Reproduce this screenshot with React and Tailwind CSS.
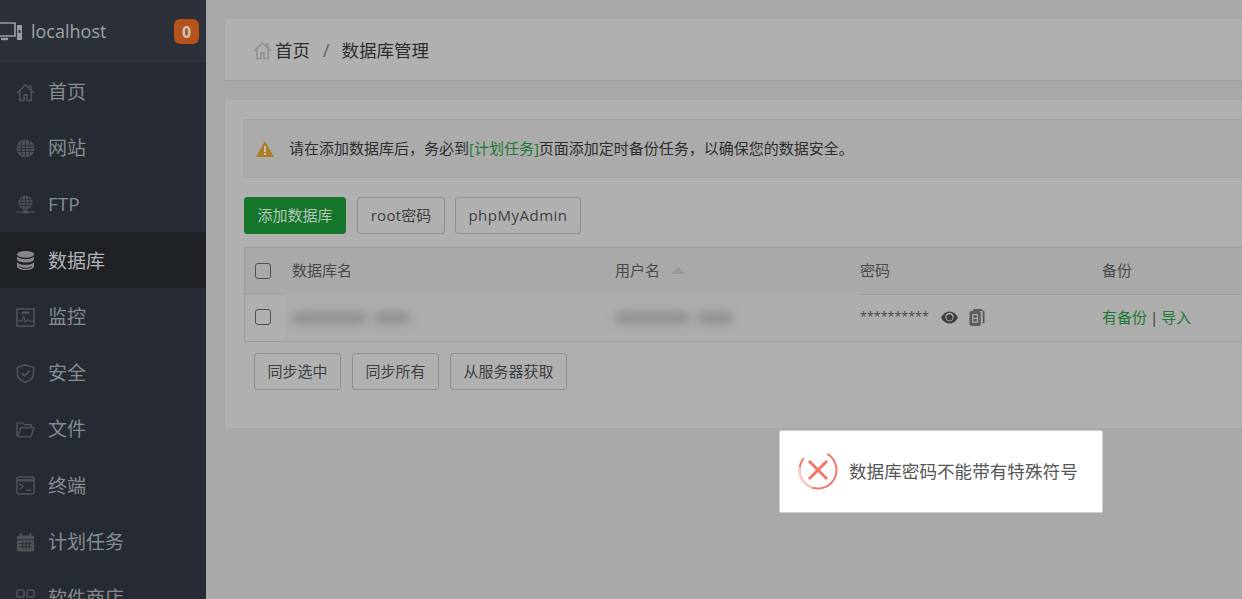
import React from "react";

const HomeI = (p) => (
  <svg viewBox="0 0 20 20" fill="none" stroke="currentColor" strokeWidth="1.600" {...p}>
    <path d="M1 10.500L10 2l9 8.500" />
    <path d="M4 8.500V18.500h4.500V12.500h3V18.500H16V8.500" />
    <path d="M14 3v3.500M14 3h2v5" strokeWidth="1.300" />
  </svg>
);
const Ftp = (p) => (
  <svg viewBox="0 0 20 20" {...p}>
    <circle cx="10" cy="8" r="7.500" fill="currentColor" />
    <path d="M2.500 8h15M2.500 5h15M2.500 11h15M10 .5v15M7 1c-1.500 4-1.500 10 0 14M13 1c1.500 4 1.500 10 0 14" stroke="#262b33" strokeWidth="0.800" fill="none" />
    <path d="M0 18h20" stroke="currentColor" strokeWidth="1.200" />
    <rect x="7.500" y="16" width="5" height="3.500" fill="currentColor" />
  </svg>
);
const GlobeGrid = (p) => (
  <svg viewBox="0 0 20 20" fill="currentColor" {...p}>
    <circle cx="10" cy="10" r="9.500" />
    <path d="M1 7h18M1 10h18M1 13h18M10 1v18M6.500 1.500c-1.500 5-1.500 12 0 17M13.500 1.500c1.500 5 1.500 12 0 17" stroke="#262b33" strokeWidth="0.900" fill="none" />
  </svg>
);
const Db = (p) => (
  <svg viewBox="0 0 20 20" fill="currentColor" {...p}>
    <ellipse cx="10" cy="3.500" rx="9" ry="3.500" />
    <path d="M1 5.500c1.500 2.200 5 3 9 3s7.500-.8 9-3v3.500c-1 2.200-5 3.200-9 3.200S2 11.200 1 9z" />
    <path d="M1 11.500c1.500 2.200 5 3 9 3s7.500-.8 9-3V16c0 2.300-4 4-9 4s-9-1.700-9-4z" />
    <path d="M3 16.200c2 1.500 4.500 2 7 2s5-.5 7-2" stroke="#1e2126" strokeWidth="0.900" fill="none" />
  </svg>
);
const Monitor = (p) => (
  <svg viewBox="0 0 20 20" fill="none" stroke="currentColor" strokeWidth="1.600" {...p}>
    <rect x="1" y="1" width="18" height="18" />
    <path d="M2 13l4 1 2-5 2 6 2-3 2 2h4" strokeWidth="1.100" />
    <path d="M6 5h8" strokeWidth="2.500" />
  </svg>
);
const Shield = (p) => (
  <svg viewBox="0 0 20 20" fill="none" stroke="currentColor" strokeWidth="1.700" {...p}>
    <path d="M10 1L18.500 3.500V10.500C18.500 15 14.500 17.500 10 19.500 5.500 17.500 1.500 15 1.500 10.500V3.500z" />
    <path d="M6 9.500l3 3 5.500-5.500" strokeWidth="1.900" />
  </svg>
);
const Folder = (p) => (
  <svg viewBox="0 0 20 20" fill="none" stroke="currentColor" strokeWidth="1.500" {...p}>
    <path d="M1 17V3h6l2 2h7v3" />
    <path d="M1 17.500h15l3-9.500H5l-3 9" />
  </svg>
);
const Term = (p) => (
  <svg viewBox="0 0 20 20" fill="none" stroke="currentColor" strokeWidth="1.500" {...p}>
    <rect x="1" y="1" width="18" height="18" rx="1.500" />
    <path d="M1 4.500h18" strokeWidth="2.500" />
    <path d="M4 8l3.500 3L4 14M10 15h6" />
  </svg>
);
const Cal = (p) => (
  <svg viewBox="0 0 20 20" fill="currentColor" {...p}>
    <rect x="1" y="2.500" width="18" height="17" rx="2" />
    <path d="M5 0v4M15 0v4" stroke="currentColor" strokeWidth="2" />
    <path d="M1 7h18M3 11h14M3 14.500h14M7 9v8M10.500 9v8M14 9v8" stroke="#262b33" strokeWidth="0.900" />
  </svg>
);
const Apps = (p) => (
  <svg viewBox="0 0 20 20" fill="none" stroke="currentColor" strokeWidth="1.600" {...p}>
    <rect x="1" y="1" width="7.500" height="7.500" rx="2" />
    <rect x="11.500" y="1" width="7.500" height="7.500" rx="2" />
    <rect x="1" y="11.500" width="7.500" height="7.500" rx="2" />
    <rect x="11.500" y="11.500" width="7.500" height="7.500" rx="2" />
  </svg>
);
const Server = (p) => (
  <svg viewBox="0 0 22 20" fill="none" stroke="currentColor" strokeWidth="1.700" {...p}>
    <path d="M0 1h15v13H0" />
    <path d="M1 17h7" strokeWidth="2.400" />
    <rect x="17" y="3" width="5" height="15" fill="currentColor" stroke="none" />
    <rect x="18.500" y="8" width="2" height="3" fill="#2c3038" stroke="none" />
  </svg>
);

const nav = [
  ["首页", HomeI],
  ["网站", GlobeGrid],
  ["FTP", Ftp],
  ["数据库", Db, true],
  ["监控", Monitor],
  ["安全", Shield],
  ["文件", Folder],
  ["终端", Term],
  ["计划任务", Cal],
  ["软件商店", Apps],
];

const Btn = ({ children, className = "" }) => (
  <button className={`h-[37px] rounded-[3px] border border-[#8f8f8f] text-[15px] text-[#3f3f3f] ${className}`}>
    {children}
  </button>
);
const Check = () => <span className="block h-4 w-4 rounded-[3px] border border-[#4f4f4f]" />;
const Blur = ({ w1, w2 }) => (
  <span className="flex items-center gap-[7px]">
    <span className="block h-[12px] rounded-full bg-[#8f8f8f] blur-[5px]" style={{ width: w1 }} />
    <span className="block h-[12px] rounded-full bg-[#8f8f8f] blur-[5px]" style={{ width: w2 }} />
  </span>
);

export default function App() {
  return (
    <div
      className="relative flex h-[599px] w-[1242px] overflow-hidden bg-[#a8a8a8]"
      style={{ fontFamily: '"Open Sans","Noto Sans CJK SC",sans-serif' }}
    >
      <aside className="w-[206px] shrink-0 overflow-hidden bg-[#262b33]">
        <div className="flex h-[63px] items-center justify-between bg-[#2c3038] pr-[7px]">
          <div className="flex items-center">
            <Server className="h-[20px] w-[22px] text-[#9a9c9f]" />
            <span className="ml-[9px] text-[18px] text-[#9fa3a6]">localhost</span>
          </div>
          <span className="flex h-[25px] w-[25px] items-center justify-center rounded-[6px] bg-[#b5531a] text-[16px] font-bold text-[#c9c4bd]">0</span>
        </div>
        {nav.map(([label, Icon, active]) => (
          <div key={label} className={`flex h-[56.250px] items-center pl-4 pt-[2px] ${active ? "bg-[#1e2126]" : ""}`}>
            <Icon className={`h-[19px] w-[19px] ${active ? "text-[#85878a]" : "text-[#4f5358]"}`} />
            <span className={`ml-[13px] text-[19px] ${active ? "text-[#b3b4b5]" : "text-[#888b8f]"}`}>{label}</span>
          </div>
        ))}
      </aside>

      <main className="w-[1100px] shrink-0 pl-[19px] pt-[19px]">
        <div className="flex h-[62px] items-center border-b border-[#a0a0a0] bg-[#b0b0b0] pl-7 pt-[2px] text-[17.500px] text-[#2e2e2e]">
          <HomeI className="h-[19px] w-[19px] text-[#909090]" />
          <span className="ml-[3px]">首页</span>
          <span className="ml-[13px] mr-[12px] text-[#5e5e5e]">/</span>
          <span>数据库管理</span>
        </div>

        <div className="mt-[19px] h-[328px] bg-[#b0b0b0] px-[19px] pt-[19px]">
          <div className="flex h-[59px] items-center border border-[#a3a3a3] bg-[#ababab] pl-[11px] text-[15px] text-[#2e2e2e]">
            <svg viewBox="0 0 18 16" className="h-[16px] w-[18px] text-[#ac7e28]">
              <path d="M9 0l9 16H0z" fill="currentColor" />
              <path d="M8 5h2v6H8zM8 12h2v2H8z" fill="#c8c0a8" />
            </svg>
            <span className="ml-[15px]">
              请在添加数据库后，务必到<span className="text-[#1d7a33]">[计划任务]</span>页面添加定时备份任务，以确保您的数据安全。
            </span>
          </div>

          <div className="mt-[19px] flex">
            <Btn className="w-[102px] border-[#17752b] bg-[#17752b] !text-[#b4c6b8]">添加数据库</Btn>
            <Btn className="ml-[11px] w-[88px]"><span className="tracking-[0.300px]">root</span>密码</Btn>
            <Btn className="ml-[10px] w-[126px] tracking-[0.500px]">phpMyAdmin</Btn>
          </div>

          <div className="mt-[13px] h-[95px] border border-[#9c9c9c] text-[15px] text-[#4a4a4a]">
            <div className="flex h-[46px] items-center bg-[#a9a9a9]">
              <div className="w-[47px] pl-[10px]"><Check /></div>
              <div className="w-[323px] pb-[2px]">数据库名</div>
              <div className="flex w-[245px] items-center pb-[2px]">
                用户名
                <span className="ml-[11px] h-0 w-0 border-x-[7px] border-b-[7px] border-x-transparent border-b-[#959a8e]" />
              </div>
              <div className="w-[242px] pb-[2px]">密码</div>
              <div className="pb-[2px]">备份</div>
            </div>
            <div className="flex h-[47px] items-center bg-[#adadad]">
              <div className="h-full w-[40px] border-t border-[#a0a0a0] bg-[#b0b0b0] pl-[10px] pt-[14px]"><Check /></div>
              <div className="w-[7px]" />
              <div className="w-[323px]"><Blur w1="75px" w2="36px" /></div>
              <div className="w-[175px]"><Blur w1="75px" w2="36px" /></div>
              <div className="h-full w-[70px]" />
              <div className="flex h-full w-[242px] items-center border-t border-[#a0a0a0] pb-[2px]">
                <span className="text-[12.500px]">**********</span>
                <svg viewBox="0 0 17 13" className="ml-[12px] h-[13px] w-[17px] text-[#3f3f3f]">
                  <path d="M0 6.500C2 2.500 5 .5 8.500 .5S15 2.500 17 6.500C15 10.500 12 12.500 8.500 12.500S2 10.500 0 6.500z" fill="currentColor" />
                  <circle cx="8.500" cy="6" r="4.200" fill="#a9a9a9" />
                  <circle cx="8.500" cy="6.500" r="3" fill="currentColor" />
                </svg>
                <svg viewBox="0 0 16 18" className="ml-[11px] h-[17px] w-[16px] text-[#5c5c5c]">
                  <path d="M4 0h9l3 3v12h-2V2H4z" fill="currentColor" />
                  <rect width="12" height="16" x="0" y="2" rx="2" fill="currentColor" />
                  <path d="M3.500 6h5v8h-5zM3.500 10h5" fill="none" stroke="#a9a9a9" strokeWidth="1.300" />
                </svg>
              </div>
              <div className="flex h-full flex-1 items-center border-t border-[#a0a0a0] pb-[2px]">
                <span className="text-[#1d7a33]">有备份</span>
                <span className="mx-[3px] text-[#333]">|</span>
                <span className="text-[#1d7a33]">导入</span>
              </div>
            </div>
          </div>

          <div className="mt-[11px] flex gap-[11px] pl-[10px]">
            <Btn className="w-[87px]">同步选中</Btn>
            <Btn className="w-[87px]">同步所有</Btn>
            <Btn className="w-[117px]">从服务器获取</Btn>
          </div>
        </div>
      </main>

      <div className="absolute left-[779px] top-[430px] flex h-[83px] w-[324px] items-center rounded-[2px] border border-[#cfcfcf] bg-white pl-[18px] text-[17.600px] text-[#565656]">
        <svg viewBox="0 0 40 40" className="mb-[3px] h-[40px] w-[40px]">
          <circle cx="20" cy="20" r="18.500" fill="none" stroke="#f0776c" strokeWidth="2" strokeDasharray="90 26.200" transform="rotate(-60 20 20)" />
          <circle cx="20" cy="20" r="18.500" fill="none" stroke="#f8cfca" strokeWidth="2" strokeDasharray="26 90.200" transform="rotate(108 20 20)" />
          <path d="M11 11l18 18M29 11L11 29" stroke="#f0776c" strokeWidth="3" />
        </svg>
        <span className="ml-[11px]">数据库密码不能带有特殊符号</span>
      </div>
    </div>
  );
}
